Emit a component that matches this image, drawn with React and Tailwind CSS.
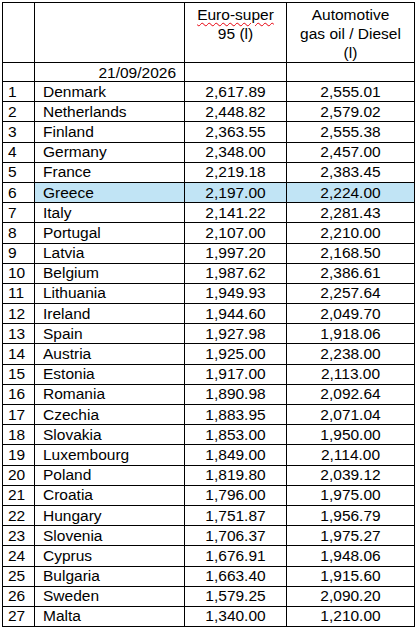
import React from 'react';

const rows = [
  ['Denmark', '2,617.89', '2,555.01'],
  ['Netherlands', '2,448.82', '2,579.02'],
  ['Finland', '2,363.55', '2,555.38'],
  ['Germany', '2,348.00', '2,457.00'],
  ['France', '2,219.18', '2,383.45'],
  ['Greece', '2,197.00', '2,224.00'],
  ['Italy', '2,141.22', '2,281.43'],
  ['Portugal', '2,107.00', '2,210.00'],
  ['Latvia', '1,997.20', '2,168.50'],
  ['Belgium', '1,987.62', '2,386.61'],
  ['Lithuania', '1,949.93', '2,257.64'],
  ['Ireland', '1,944.60', '2,049.70'],
  ['Spain', '1,927.98', '1,918.06'],
  ['Austria', '1,925.00', '2,238.00'],
  ['Estonia', '1,917.00', '2,113.00'],
  ['Romania', '1,890.98', '2,092.64'],
  ['Czechia', '1,883.95', '2,071.04'],
  ['Slovakia', '1,853.00', '1,950.00'],
  ['Luxembourg', '1,849.00', '2,114.00'],
  ['Poland', '1,819.80', '2,039.12'],
  ['Croatia', '1,796.00', '1,975.00'],
  ['Hungary', '1,751.87', '1,956.79'],
  ['Slovenia', '1,706.37', '1,975.27'],
  ['Cyprus', '1,676.91', '1,948.06'],
  ['Bulgaria', '1,663.40', '1,915.60'],
  ['Sweden', '1,579.25', '2,090.20'],
  ['Malta', '1,340.00', '1,210.00'],
];

export default function App() {
  return (
    <div className="bg-white w-[417px] h-[632px] pt-[2px] pl-[2px] text-[15.5px] text-black font-['Liberation_Sans',Arial,sans-serif]">
      <table className="table-fixed border-collapse w-[412px]">
        <colgroup>
          <col className="w-[32px]" />
          <col className="w-[150px]" />
          <col className="w-[102px]" />
          <col className="w-[128px]" />
        </colgroup>
        <tbody>
          <tr className="h-[60px]">
            <td className="border border-black" />
            <td className="border border-black" />
            <td className="border border-black align-top text-center leading-[19px] pt-[2px]">
              <span className="underline decoration-wavy decoration-red-600 decoration-1 underline-offset-2">Euro-super</span>
              <br />
              95 (l)
            </td>
            <td className="border border-black align-top text-center leading-[19px] pt-[2px]">
              Automotive
              <br />
              gas oil / Diesel
              <br />
              (l)
            </td>
          </tr>
          <tr className="h-[19px]">
            <td className="border border-black" />
            <td className="border border-black text-right pr-[8px] leading-[17px]">21/09/2026</td>
            <td className="border border-black" />
            <td className="border border-black" />
          </tr>
          {rows.map(([country, euro, diesel], i) => {
            const hl = country === 'Greece';
            return (
              <tr key={country} className="h-[20.2px]">
                <td className="border border-black pl-[5px] leading-[18px]">{i + 1}</td>
                <td className={`border border-black pl-[8px] leading-[18px] ${hl ? 'bg-[#c1e4f5]' : ''}`}>{country}</td>
                <td className={`border border-black text-center leading-[18px] ${hl ? 'bg-[#c1e4f5]' : ''}`}>{euro}</td>
                <td className={`border border-black text-center leading-[18px] ${hl ? 'bg-[#c1e4f5]' : ''}`}>{diesel}</td>
              </tr>
            );
          })}
        </tbody>
      </table>
    </div>
  );
}
